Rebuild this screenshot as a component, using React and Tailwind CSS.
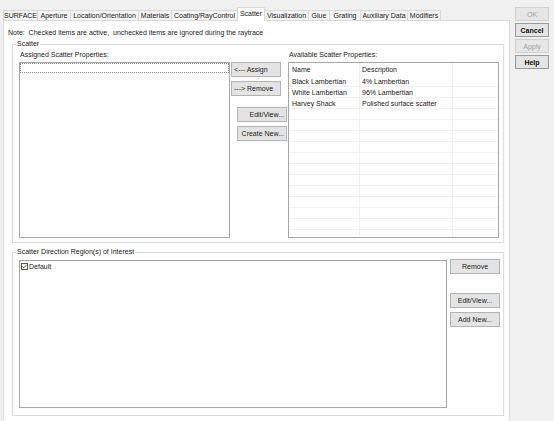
import React from "react";

const tabs = [
  ["SURFACE", 35],
  ["Aperture", 34],
  ["Location/Orientation", 69],
  ["Materials", 34],
  ["Coating/RayControl", 67],
  ["Scatter", 28],
  ["Visualization", 45],
  ["Glue", 22],
  ["Grating", 32],
  ["Auxiliary Data", 48],
  ["Modifiers", 34],
];

const scatterProps = [
  ["Black Lambertian", "4% Lambertian"],
  ["White Lambertian", "96% Lambertian"],
  ["Harvey Shack", "Polished surface scatter"],
];

function Btn({ children, className = "", align = "justify-center" }) {
  return (
    <div
      className={`flex h-[15px] w-[50px] items-center ${align} border border-[#b4b4b4] bg-[#e3e3e3] text-[7px] leading-none text-[#1a1a1a] ${className}`}
    >
      {children}
    </div>
  );
}

function SideBtn({ children, disabled, bold }) {
  return (
    <div
      className={`flex h-[14px] w-[34px] items-center justify-center border text-[7px] leading-none ${
        disabled ? "border-[#cfcfcf] bg-[#e6e6e6] text-[#a3a3a3]" : "border-[#9a9a9a] bg-[#e3e3e3] text-[#111]"
      } ${bold ? "font-bold" : ""}`}
    >
      {children}
    </div>
  );
}

function Group({ label, className = "", children }) {
  return (
    <div className={`relative border border-[#dcdcdc] ${className}`}>
      <span className="absolute -top-[5px] left-[3px] bg-white px-px text-[7px] leading-[8px] text-[#222]">{label}</span>
      {children}
    </div>
  );
}

export default function App() {
  const rows = [...scatterProps, ...Array(12).fill(["", ""])];

  return (
    <div className="flex h-[421px] w-[554px] overflow-hidden bg-[#f0f0f0] font-['Liberation_Sans',Arial,sans-serif] text-[#1a1a1a]">
      <div className="flex w-[510px] flex-col pl-[3px]">
        {/* tab strip */}
        <div className="flex h-[20px] items-end pl-px">
          {tabs.map(([name, w]) => {
            const active = name === "Scatter";
            return (
              <div
                key={name}
                style={{ width: w }}
                className={`-ml-px flex shrink-0 items-center justify-center border border-b-0 border-[#d9d9d9] text-[7px] leading-none whitespace-nowrap ${
                  active ? "relative z-10 -mb-px h-[14px] bg-white pb-[2px]" : "h-[10px] bg-[#f4f4f4]"
                }`}
              >
                {name}
              </div>
            );
          })}
        </div>

        {/* tab page */}
        <div className="flex-1 border-x border-t border-[#d9d9d9] bg-white">
          <div className="mt-[8px] h-[8px] pl-[4px] text-[7px] leading-[8px] whitespace-nowrap">
            Note:&nbsp; Checked items are active,&nbsp; unchecked items are ignored during the raytrace
          </div>

          <Group label="Scatter" className="ml-[8px] mt-[7px] h-[199px] w-[492px]">
            <div className="flex pl-[6px]">
              <div className="w-[211px]">
                <div className="mt-[6px] h-[8px] pl-px text-[7px] leading-[8px] whitespace-nowrap">Assigned Scatter Properties:</div>
                <div className="mt-[3px] h-[176px] border border-[#a8a8a8] bg-white">
                  <div className="h-[10px] border border-dotted border-[#8a8a8a]" />
                </div>
              </div>

              <div className="flex w-[58px] flex-col pt-[17px]">
                <Btn className="ml-px" align="justify-start pl-[2px]">&lt;--- Assign</Btn>
                <Btn className="ml-px mt-[4px]" align="justify-start pl-[2px]">---&gt; Remove</Btn>
                <Btn className="ml-[7px] mt-[11px]" align="justify-end pr-[2px]">Edit/View...</Btn>
                <Btn className="ml-[7px] mt-[4px]" align="justify-end pr-[2px]">Create New...</Btn>
              </div>

              <div className="w-[211px]">
                <div className="mt-[6px] h-[8px] pl-px text-[7px] leading-[8px] whitespace-nowrap">Available Scatter Properties:</div>
                <div className="mt-[3px] h-[176px] overflow-hidden border border-[#a8a8a8] bg-white text-[7px] leading-none">
                  <div className="flex h-[13px]">
                    <div className="flex w-[71px] items-center border-r border-[#f0f0f0] pl-[3px]">Name</div>
                    <div className="flex w-[93px] items-center border-r border-[#f0f0f0] pl-[2px]">Description</div>
                    <div className="flex-1" />
                  </div>
                  {rows.map(([n, d], i) => (
                    <div key={i} className="flex h-[11px] border-b border-[#f0f0f0]">
                      <div className="flex w-[71px] items-center border-r border-[#f0f0f0] pl-[3px] whitespace-nowrap">{n}</div>
                      <div className="flex w-[93px] items-center border-r border-[#f0f0f0] pl-[2px] whitespace-nowrap">{d}</div>
                      <div className="flex-1" />
                    </div>
                  ))}
                </div>
              </div>
            </div>
          </Group>

          <Group label="Scatter Direction Region(s) of Interest" className="ml-[8px] mt-[9px] h-[164px] w-[492px]">
            <div className="flex items-start pl-[6px] pt-[6px]">
              <div className="mt-px h-[148px] w-[428px] border border-[#a8a8a8] bg-white">
                <div className="flex h-[9px] items-center pl-px pt-[1px] text-[7px] leading-none">
                  <span className="flex h-[7px] w-[7px] items-center justify-center border border-[#555] bg-white">
                    <svg viewBox="0 0 7 7" className="h-[5px] w-[5px]">
                      <path d="M0.8 3.6 L2.7 5.4 L6.2 1.2" fill="none" stroke="#222" strokeWidth="1" />
                    </svg>
                  </span>
                  <span className="ml-px">Default</span>
                </div>
              </div>
              <div className="ml-[3px] flex flex-col">
                <Btn>Remove</Btn>
                <Btn className="mt-[19px]">Edit/View...</Btn>
                <Btn className="mt-[4px]">Add New...</Btn>
              </div>
            </div>
          </Group>
        </div>
      </div>

      {/* dialog buttons */}
      <div className="flex w-[44px] flex-col gap-[2px] pl-[5px] pt-[7px]">
        <SideBtn disabled>OK</SideBtn>
        <SideBtn bold>Cancel</SideBtn>
        <SideBtn disabled>Apply</SideBtn>
        <SideBtn bold>Help</SideBtn>
      </div>
    </div>
  );
}
